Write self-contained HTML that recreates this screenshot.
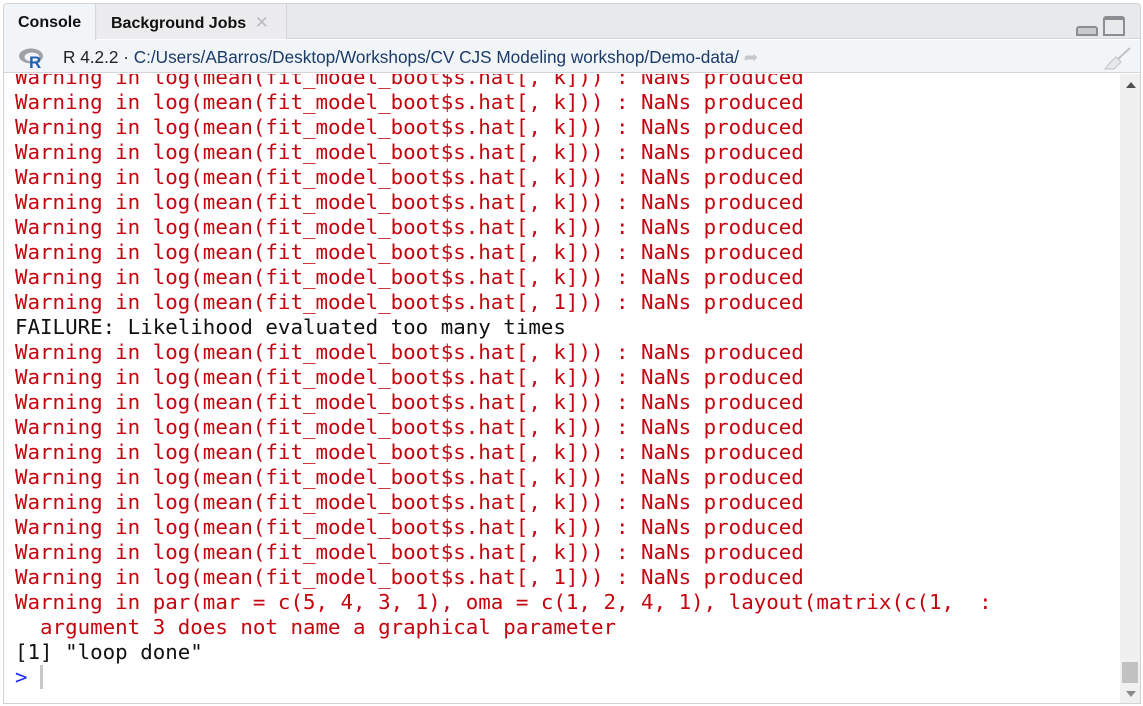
<!DOCTYPE html>
<html><head><meta charset="utf-8"><style>
*{margin:0;padding:0;box-sizing:border-box}
body{width:1143px;height:706px;background:#fff;overflow:hidden;font-family:"Liberation Sans","DejaVu Sans",sans-serif;position:relative}
.frame{position:absolute;left:3px;top:3px;width:1138px;height:701px;border:1px solid #d0d3d6;border-radius:4px 4px 0 0;overflow:hidden;background:#fff}
.tabs{position:absolute;left:0;top:0;right:0;height:35px;background:#e8e9eb;border-bottom:1px solid #d3d6d9}
.tab{position:absolute;top:0;height:35px;font-weight:bold;font-size:16px;line-height:37px;color:#111}
.t1{left:0;width:92px;background:#f2f5f7;padding-left:14px;height:36px;border-right:1px solid #d3d6d9}
.t2{left:93px;width:190px;padding-left:14px;border-right:1px solid #d3d6d9;background:#ececee}
.x{color:#b9bbbd;font-size:17px;margin-left:4px}
.bar{position:absolute;left:0;top:36px;right:0;height:33px;background:#f2f5f7;border-bottom:1px solid #d3d6d9;font-size:17.2px;line-height:35px;color:#222}
.path{color:#1a3a6a}
.cont{position:absolute;left:0;top:70px;width:1114px;bottom:0;overflow:hidden}
pre{position:absolute;left:11px;top:-9px;font-family:"DejaVu Sans Mono","Liberation Mono",monospace;font-size:20.8px;line-height:25px;color:#111}
.r{color:#c5040f}
.sb{position:absolute;right:0;top:70px;width:20px;bottom:0;background:#f0f0f0}
</style></head><body>
<div class="frame">
<div class="tabs">
<div class="tab t1">Console</div>
<div class="tab t2">Background Jobs <span class="x">✕</span></div>
<div style="position:absolute;left:1072px;top:22px;width:22px;height:10px;border:2px solid #8a8e92;border-radius:3px 3px 0 0;background:#c8cbce"></div>
<div style="position:absolute;left:1099px;top:12px;width:22px;height:20px;border:2px solid #8a8e92;border-radius:3px 3px 0 0;border-top-width:4px"></div>
</div>
<div class="bar">
<svg style="position:absolute;left:14px;top:7px" width="28" height="22" viewBox="0 0 28 22"><ellipse cx="13" cy="9" rx="12" ry="7.5" fill="#9ea2a6"/><ellipse cx="14" cy="10" rx="7.5" ry="4.5" fill="#f2f5f7"/><text x="11" y="21" font-family="Liberation Sans" font-weight="bold" font-size="17" fill="#1f64b4">R</text></svg>
<span style="position:absolute;left:59px">R 4.2.2 · <span class="path">C:/Users/ABarros/Desktop/Workshops/CV CJS Modeling workshop/Demo-data/</span> <span style="color:#c5c8cb">➦</span></span>
<svg style="position:absolute;left:1098px;top:6px" width="30" height="24" viewBox="0 0 30 24"><line x1="28" y1="2" x2="16" y2="13" stroke="#bfc3c6" stroke-width="2"/><path d="M14 11 L19 16 L12 23 L3 23 Q8 16 14 11Z" fill="#e6e8ea" stroke="#bfc3c6"/></svg>
</div>
<div class="cont"><pre><span class="r">Warning in log(mean(fit_model_boot$s.hat[, k])) : NaNs produced
Warning in log(mean(fit_model_boot$s.hat[, k])) : NaNs produced
Warning in log(mean(fit_model_boot$s.hat[, k])) : NaNs produced
Warning in log(mean(fit_model_boot$s.hat[, k])) : NaNs produced
Warning in log(mean(fit_model_boot$s.hat[, k])) : NaNs produced
Warning in log(mean(fit_model_boot$s.hat[, k])) : NaNs produced
Warning in log(mean(fit_model_boot$s.hat[, k])) : NaNs produced
Warning in log(mean(fit_model_boot$s.hat[, k])) : NaNs produced
Warning in log(mean(fit_model_boot$s.hat[, k])) : NaNs produced
Warning in log(mean(fit_model_boot$s.hat[, 1])) : NaNs produced</span>
FAILURE: Likelihood evaluated too many times
<span class="r">Warning in log(mean(fit_model_boot$s.hat[, k])) : NaNs produced
Warning in log(mean(fit_model_boot$s.hat[, k])) : NaNs produced
Warning in log(mean(fit_model_boot$s.hat[, k])) : NaNs produced
Warning in log(mean(fit_model_boot$s.hat[, k])) : NaNs produced
Warning in log(mean(fit_model_boot$s.hat[, k])) : NaNs produced
Warning in log(mean(fit_model_boot$s.hat[, k])) : NaNs produced
Warning in log(mean(fit_model_boot$s.hat[, k])) : NaNs produced
Warning in log(mean(fit_model_boot$s.hat[, k])) : NaNs produced
Warning in log(mean(fit_model_boot$s.hat[, k])) : NaNs produced
Warning in log(mean(fit_model_boot$s.hat[, 1])) : NaNs produced
Warning in par(mar = c(5, 4, 3, 1), oma = c(1, 2, 4, 1), layout(matrix(c(1,  :
  argument 3 does not name a graphical parameter</span>
[1] "loop done"
<span style="color:#1a2eea">&gt;</span> <span style="display:inline-block;width:3px;height:24px;background:#c8c8c8;vertical-align:-5px"></span></pre></div>
<div class="sb">
<div style="position:absolute;left:6px;top:8px;border:5px solid transparent;border-bottom:6px solid #505050;border-top:0"></div>
<div style="position:absolute;left:2px;top:588px;width:16px;height:21px;background:#c1c1c1"></div>
<div style="position:absolute;left:6px;top:617px;border:5px solid transparent;border-top:6px solid #8a8a8a;border-bottom:0"></div>
</div>
</div>
</body></html>
